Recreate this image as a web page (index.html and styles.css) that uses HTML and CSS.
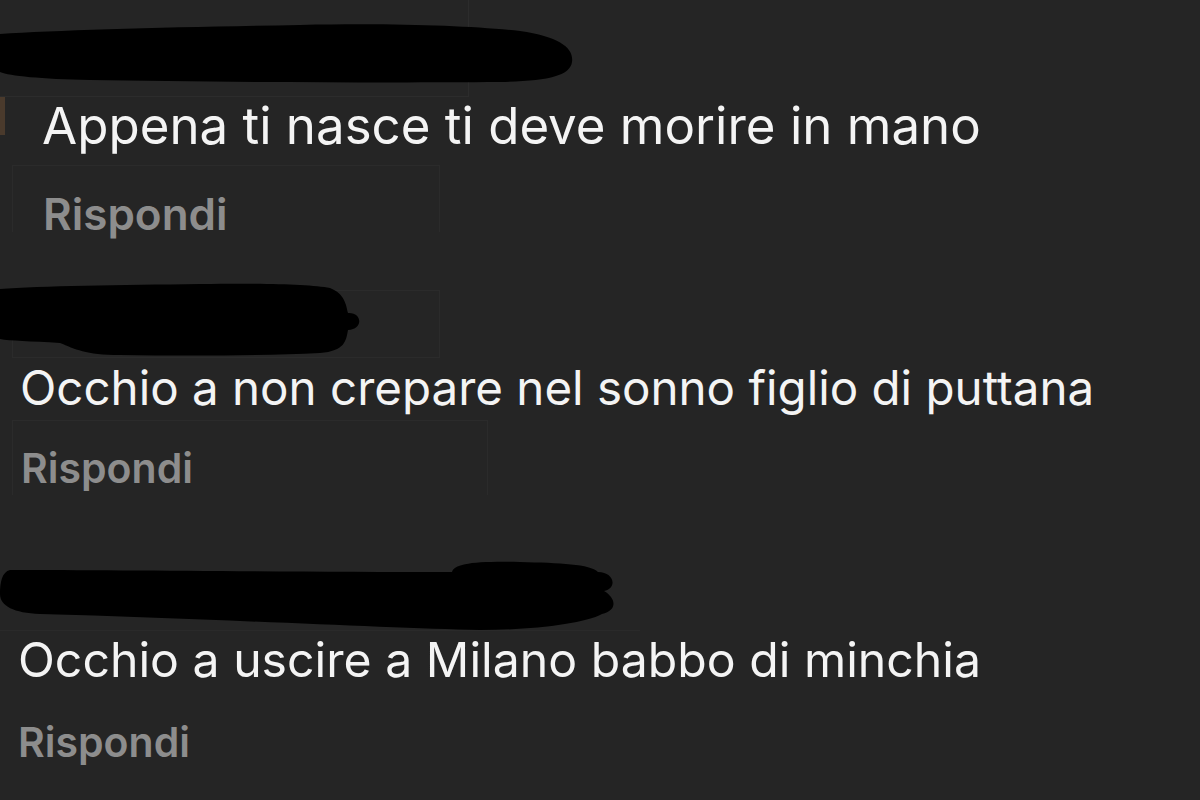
FILE: index.html
```html
<!DOCTYPE html>
<html lang="it">
<head>
    <meta charset="UTF-8">
    <title>Commenti</title>
    <link rel="stylesheet" href="styles.css">
</head>

<body>
    <main class="thread">
        <article class="comment first">
            <div class="author">
                <svg class="scribble" width="580" height="97" viewBox="0 0 580 97">
                    <path d="M0 34 C60 30 180 27 300 25 C400 23 470 26 520 31 C560 37 574 48 572 62 C570 76 548 81 500 82 C380 83 200 82 90 80 C40 79 10 76 0 72 Z" fill="#000"/>
                </svg>
            </div>
            <p class="body">Appena ti nasce ti deve morire in mano</p>
            <div class="actions"><span class="reply">Rispondi</span></div>
        </article>

        <article class="comment second">
            <div class="author">
                <svg class="scribble" width="370" height="76" viewBox="0 0 370 76">
                    <path d="M0 6 C40 3 120 2 200 1 C260 0 310 1 330 5 C345 11 346 22 348 30 C362 29 364 46 348 47 C346 58 345 68 320 70 C260 73 180 73 120 72 C85 72 75 66 60 60 C30 58 10 58 0 56 Z" fill="#000"/>
                </svg>
            </div>
            <p class="body">Occhio a non crepare nel sonno figlio di puttana</p>
            <div class="actions"><span class="reply">Rispondi</span></div>
        </article>

        <article class="comment third">
            <div class="author">
                <svg class="scribble" width="620" height="71" viewBox="0 0 620 71">
                    <path d="M10 10 C120 10 300 12 452 12 C454 4 472 1 520 2 C560 3 590 4 598 12 C614 12 618 28 604 31 C616 38 618 50 602 54 C584 64 530 70 480 70 C380 68 200 58 40 54 C14 53 0 46 0 34 C0 22 2 12 10 10 Z" fill="#000"/>
                </svg>
            </div>
            <p class="body">Occhio a uscire a Milano babbo di minchia</p>
            <div class="actions"><span class="reply">Rispondi</span></div>
        </article>
    </main>
</body>
</html>
```

FILE: styles.css
```css
* {
    box-sizing: border-box;
}

body {
    margin: 0;
    background: #252525;
    font-family: Inter, "Noto Sans", sans-serif;
    overflow: hidden;
}

.thread {
    display: flex;
    flex-direction: column;
    width: 1200px;
    height: 800px;
}

.comment {
    display: flex;
    flex-direction: column;
}

.scribble {
    display: block;
    overflow: visible;
}

.body {
    margin: 0;
    color: #f4f4f4;
    font-size: 47.5px;
    line-height: 58px;
    padding-left: 20px;
}

.reply {
    display: block;
    font-size: 41px;
    line-height: 48px;
    font-weight: 600;
    color: #8d8d8d;
}

/* first comment: photo is a bit closer, so everything is larger */
.first .author {
    height: 97px;
    width: 469px;
    border-right: 1px solid #2c2c2c;
    border-bottom: 1px solid #2c2c2c;
    position: relative;
}

.first .author::after {
    content: "";
    position: absolute;
    left: 0;
    top: 97px;
    width: 5px;
    height: 38px;
    background: #4a3a2c;
}

.first .body {
    font-size: 51px;
    padding-left: 42px;
}

.first .actions {
    margin: 10px 0 0 12px;
    width: 428px;
    height: 67px;
    padding: 24px 0 0 30px;
    border: 1px solid #2b2b2b;
    border-bottom: none;
}

.first .reply {
    font-size: 44px;
}

.second .author {
    margin: 58px 0 0 12px;
    width: 428px;
    height: 68px;
    border: 1px solid #2b2b2b;
}

.second .scribble {
    margin: -8px 0 0 -13px;
}

.second .body {
    margin-top: 1px;
}

.second .actions {
    margin: 3px 0 0 12px;
    width: 476px;
    height: 75px;
    padding: 23px 0 0 8px;
    border: 1px solid #2b2b2b;
    border-bottom: none;
}

.third .author {
    margin-top: 65px;
    height: 71px;
    width: 640px;
    border-bottom: 1px solid #2a2a2a;
}

.third .body {
    padding-left: 18px;
    font-size: 48.2px;
}

.third .actions {
    margin-top: 29px;
    padding-left: 18px;
}
```
